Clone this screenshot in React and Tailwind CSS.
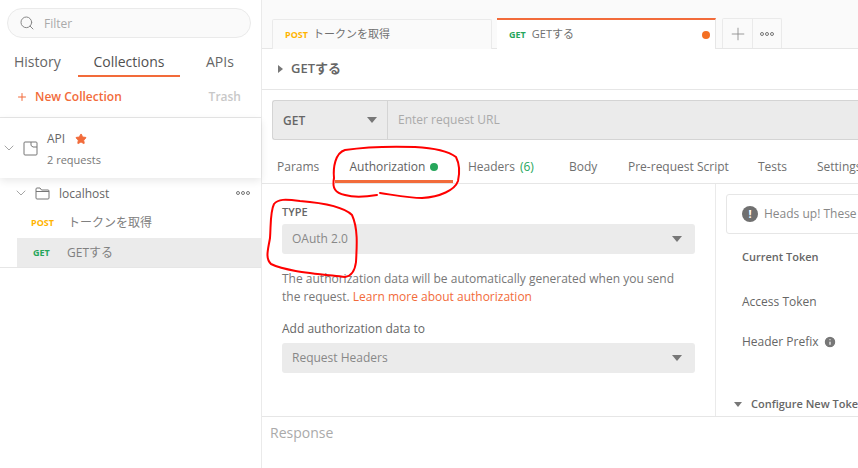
import { Search, Plus, ChevronDown, Star, Info } from "lucide-react";

function Dots() {
  return (
    <div className="flex gap-[1px]">
      <span className="w-[4px] h-[4px] rounded-full border border-[#777]" />
      <span className="w-[4px] h-[4px] rounded-full border border-[#777]" />
      <span className="w-[4px] h-[4px] rounded-full border border-[#777]" />
    </div>
  );
}

function Caret({ className }) {
  return <span className={"w-0 h-0 border-x-[5px] border-x-transparent border-t-[6px] border-t-[#777] " + className} />;
}

function Sidebar() {
  return (
    <div className="w-[262px] shrink-0 h-full border-r border-[#eaeaea] flex flex-col text-[#666]">
      <div className="pl-[7px] pr-[10px] pt-[8px]">
        <div className="h-[30px] rounded-full bg-[#fafafa] border border-[#eaeaea] flex items-center pl-[11px] gap-[9px]">
          <Search size={16} strokeWidth={1.5} className="text-[#888]" />
          <span className="text-[12px] leading-[18px] pt-[2px] text-[#aaa]">Filter</span>
        </div>
      </div>
      <div className="flex mt-[10px] h-[29px] text-[14px] text-[#666]">
        <div className="ml-[14px] w-[64px] leading-[28px]">History</div>
        <div className="w-[102px] text-center leading-[28px] text-[#505050] border-b-2 border-[#f26b3a]">Collections</div>
        <div className="ml-[26px] leading-[28px]">APIs</div>
      </div>
      <div className="flex items-center justify-between h-[41px] pl-[16px] pr-[20px] border-b border-[#e6e6e6] text-[12px] font-semibold">
        <div className="flex items-center gap-[7px] text-[#f26b3a]">
          <Plus size={12} strokeWidth={2} />
          <span>New Collection</span>
        </div>
        <span className="text-[#c8c8c8]">Trash</span>
      </div>
      <div className="relative h-[60px] flex items-center pl-[1px] shadow-[0_3px_8px_rgba(0,0,0,0.09)]">
        <ChevronDown size={16} strokeWidth={1} className="text-[#777]" />
        <svg width="15" height="15" viewBox="0 0 15 15" fill="none" stroke="#777" className="ml-[6px] mr-[9px]">
          <rect x="1" y="1" width="13" height="13" rx="1" />
          <path d="M8 1v3.500l2 1.500h4" />
        </svg>
        <div className="pt-[3px] text-[#666]">
          <div className="flex items-center h-[20px] text-[12px]">
            API
            <Star size={12} className="ml-[10px] text-[#f26b3a] fill-[#f26b3a]" />
          </div>
          <div className="text-[11px] mt-[1px] leading-[20px] text-[#777]">2 requests</div>
        </div>
      </div>
      <div className="h-[30px] flex items-center pl-[13px] pr-[11px] text-[12px]">
        <ChevronDown size={16} strokeWidth={1} className="text-[#777]" />
        <svg width="15" height="13" viewBox="0 0 15 13" fill="none" stroke="#777" className="ml-[6px] mr-[9px]">
          <path d="M1 11V2a1 1 0 0 1 1-1h3l1.500 2H13a1 1 0 0 1 1 1v7a1 1 0 0 1-1 1H2a1 1 0 0 1-1-1z" />
          <path d="M1 4.500h13" />
        </svg>
        <span className="pt-[1px]">localhost</span>
        <div className="ml-auto"><Dots /></div>
      </div>
      <div className="h-[30px] flex items-center pl-[31px] text-[12px] text-[#808080]">
        <span className="w-[37px] text-[9px] font-bold text-[#ffb400]">POST</span>
        <span className="-mt-[1px]">トークンを取得</span>
      </div>
      <div className="h-[30px] ml-[17px] flex items-center pl-[16px] bg-[#ebebeb] text-[12px] text-[#808080]">
        <span className="w-[34px] text-[9px] font-bold text-[#26a65b]">GET</span>
        <span className="-mt-[1px]">GETする</span>
      </div>
      <div className="-mt-px border-t border-[#e6e6e6]" />
    </div>
  );
}

function RequestTabs() {
  return (
    <div className="h-[49px] shrink-0 bg-[#fafafa] border-b border-[#e6e6e6] flex items-end pl-[10px] text-[11px]">
      <div className="w-[220px] h-[30px] -mb-px bg-[#fafafa] border border-b-0 border-[#eaeaea] rounded-t-[2px] flex items-center pl-[12px] text-[#707070]">
        <span className="text-[9px] font-bold text-[#ffb400] mr-[5px]">POST</span>
        トークンを取得
      </div>
      <div className="ml-[5px] w-[219px] h-[31px] -mb-px bg-white border-t-2 border-r border-t-[#f26b3a] border-r-[#e6e6e6] flex items-center pl-[12px] pr-[5px] text-[#707070]">
        <span className="text-[9px] font-bold text-[#26a65b] mr-[6px]">GET</span>
        GETする
        <span className="ml-auto w-[8px] h-[8px] rounded-full bg-[#f47023]" />
      </div>
      <div className="ml-[6px] flex h-[30px] border border-b-0 border-[#eaeaea] rounded-t-[2px]">
        <div className="w-[30px] flex items-center justify-center border-r border-[#eaeaea]">
          <Plus size={20} strokeWidth={1} className="text-[#888]" />
        </div>
        <div className="w-[28px] flex items-center justify-center"><Dots /></div>
      </div>
    </div>
  );
}

function AuthPane() {
  return (
    <div className="w-[454px] shrink-0 border-r border-[#eaeaea] pl-[20px] pr-[20px] text-[#777]">
      <div className="mt-[21px] text-[11px] font-semibold leading-[14px] text-[#666]">TYPE</div>
      <div className="mt-[5px] h-[30px] rounded-[3px] bg-[#ebebeb] flex items-center px-[10px] text-[12px] text-[#888]">
        OAuth 2.0
        <Caret className="ml-auto mr-[3px]" />
      </div>
      <p className="mt-[16px] text-[12px] leading-[18px]">
        The authorization data will be automatically generated when you send the request. <span className="text-[#f26b3a]">Learn more about authorization</span>
      </p>
      <div className="mt-[14px] text-[12px] leading-[18px] text-[#666]">Add authorization data to</div>
      <div className="mt-[5px] h-[30px] rounded-[3px] bg-[#ebebeb] flex items-center px-[10px] text-[12px] text-[#888]">
        Request Headers
        <Caret className="ml-auto mr-[3px]" />
      </div>
    </div>
  );
}

function TokenPane() {
  return (
    <div className="flex-1 min-w-0 pl-[10px] text-[11px] text-[#666] whitespace-nowrap overflow-hidden">
      <div className="mt-[10px] w-[400px] h-[40px] border border-[#e6e6e6] rounded-[3px] flex items-center pl-[15px] gap-[6px] text-[12px] text-[#888]">
        <span className="w-[16px] h-[16px] rounded-full bg-[#707070] text-white text-[11px] font-bold flex items-center justify-center">!</span>
        Heads up! These parameters hold sensitive data.
      </div>
      <div className="mt-[15px] pl-[16px] font-semibold leading-[16px]">Current Token</div>
      <div className="mt-[29px] pl-[16px] leading-[16px] text-[12px]">Access Token</div>
      <div className="mt-[24px] pl-[16px] leading-[16px] text-[12px] flex items-center gap-[4px]">
        Header Prefix
        <Info size={14} className="fill-[#777] text-white" />
      </div>
      <div className="mt-[46px] pl-[8px] leading-[16px] font-semibold flex items-center gap-[9px]">
        <span className="w-0 h-0 border-x-[4px] border-x-transparent border-t-[5px] border-t-[#777]" />
        Configure New Token
      </div>
    </div>
  );
}

// hand drawn marks from the screenshot
function Annotations() {
  return (
    <svg width="858" height="468" viewBox="0 0 858 468" fill="none" stroke="#f00" strokeWidth="2" strokeLinecap="round" strokeLinejoin="round" className="absolute inset-0 pointer-events-none">
      <path d="M377 195 C365 197 355 198 345 195 C335 193 332 188 334 178 C333 168 335 153 345 150 C365 147 385 146 415 147 C435 148 448 151 456 157 C459 163 460 172 458 181 C455 190 440 197 422 198 C410 198 400 196 380 193" />
      <path d="M352 215 C345 208 325 203 300 201 C285 199 278 199 274 204 C270 212 271 225 270 238 C268 250 265 258 271 264 C285 271 310 273 345 277 C352 276 355 270 356 262 C357 245 358 228 352 215 Z" />
    </svg>
  );
}

export default function App() {
  const tabs = [
    { label: "Params", w: "w-[58px]" },
    { label: "Authorization", w: "w-[118px]", active: true },
    { label: "Headers", w: "w-[116px] pl-[15px]", count: "(6)" },
    { label: "Body", w: "w-[59px]" },
    { label: "Pre-request Script", w: "w-[130px]" },
    { label: "Tests", w: "w-[59px]" },
    { label: "Settings", w: "w-[60px]" },
  ];

  return (
    <div className="relative w-[858px] h-[468px] overflow-hidden bg-white flex font-['Open_Sans','Noto_Sans_CJK_JP',sans-serif]">
      <Sidebar />
      <div className="flex-1 min-w-0 flex flex-col">
        <RequestTabs />
        <div className="h-[41px] shrink-0 border-b border-[#e6e6e6] flex items-center pl-[16px] text-[13px] font-semibold text-[#666]">
          <span className="w-0 h-0 border-y-[4px] border-y-transparent border-l-[5px] border-l-[#777] mr-[8px]" />
          GETする
        </div>
        <div className="mt-[10px] ml-[10px] h-[40px] shrink-0 flex bg-[#ebebeb] border-y border-l border-[#d4d4d4] rounded-l-[3px] text-[12px]">
          <div className="w-[115px] border-r border-[#d4d4d4] flex items-center pl-[10px] pr-[10px] font-semibold text-[#666]">
            <span className="pt-[1px]">GET</span>
            <Caret className="ml-auto" />
          </div>
          <div className="flex items-center pl-[10px] text-[#aaa]">Enter request URL</div>
        </div>
        <div className="mt-[10px] h-[34px] shrink-0 border-b border-[#e6e6e6] flex pl-[15px] text-[12px] text-[#707070] whitespace-nowrap">
          {tabs.map((tab) => (
            <div key={tab.label} className={tab.w + " h-[33px] flex items-center shrink-0" + (tab.active ? " justify-center gap-[5px] pt-[3px] border-b-[3px] border-[#f26b3a] text-[#606060]" : " pt-[1px]")}>
              {tab.label}
              {tab.active && <span className="w-[8px] h-[8px] rounded-full bg-[#26a65b]" />}
              {tab.count && <span className="ml-[5px] text-[#26a65b]">{tab.count}</span>}
            </div>
          ))}
        </div>
        <div className="h-[232px] shrink-0 flex">
          <AuthPane />
          <TokenPane />
        </div>
        <div className="border-t border-[#e6e6e6] pl-[8px] pt-[5px] text-[14px] text-[#aaa]">Response</div>
      </div>
      <Annotations />
    </div>
  );
}
